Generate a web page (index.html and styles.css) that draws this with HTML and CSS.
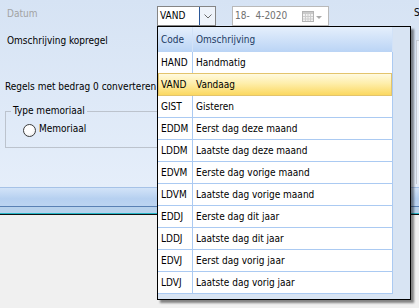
FILE: index.html
```html
<!DOCTYPE html>
<html>
<head>
<meta charset="utf-8">
<link rel="stylesheet" href="styles.css">
</head>
<body>
<div class="screen">
  <div class="panel">
    <div class="form">
      <div class="row row-datum">
        <span class="label label-disabled">Datum</span>
        <div class="combo">
          <span class="combo-text">VAND</span>
          <span class="combo-btn"><svg width="8" height="5" viewBox="0 0 8 5"><polyline points="0.5,0.5 4,4 7.5,0.5" fill="none" stroke="#6a6a6a" stroke-width="1"/></svg></span>
        </div>
        <div class="date">
          <span class="date-text">18-  4-2020</span>
          <svg class="cal" width="12" height="11" viewBox="0 0 12 11"><rect x="0.5" y="0.5" width="11" height="10" fill="#f1f1f1" stroke="#b3b3b3"/><rect x="1" y="1" width="10" height="2" fill="#cacaca"/><path d="M3.5 3v7M6 3v7M8.5 3v7M1 5.5h10M1 8h10" stroke="#cdcdcd" stroke-width="1"/></svg>
          <svg class="arrow" width="6" height="3" viewBox="0 0 6 3"><path d="M0 0h6L3 3z" fill="#a9a9a9"/></svg>
        </div>
      </div>
      <div class="row row-omschr"><span class="label">Omschrijving kopregel</span></div>
      <div class="row row-regels"><span class="label">Regels met bedrag 0 converteren</span></div>
      <fieldset class="group">
        <legend class="group-legend">Type memoriaal</legend>
        <div class="radio-row"><span class="radio-circle"></span><span class="radio-label">Memoriaal</span></div>
      </fieldset>
    </div>
    <div class="side">
      <span class="side-label">S</span>
      <div class="side-box"></div>
    </div>
  </div>
  <div class="band">
    <div class="band-line1"></div>
    <div class="band-main"></div>
    <div class="band-line2"></div>
    <div class="band-low"></div>
    <div class="band-teal"></div>
    <div class="band-dark"></div>
  </div>

  <div class="dropdown">
    <div class="list">
      <div class="list-head">
        <div class="cell c-code">Code</div>
        <div class="cell c-desc">Omschrijving</div>
      </div>
      <div class="list-row"><div class="cell c-code">HAND</div><div class="cell c-desc">Handmatig</div></div>
      <div class="list-row selected"><div class="cell c-code">VAND</div><div class="cell c-desc">Vandaag</div></div>
      <div class="list-row"><div class="cell c-code">GIST</div><div class="cell c-desc">Gisteren</div></div>
      <div class="list-row"><div class="cell c-code">EDDM</div><div class="cell c-desc">Eerst dag deze maand</div></div>
      <div class="list-row"><div class="cell c-code">LDDM</div><div class="cell c-desc">Laatste dag deze maand</div></div>
      <div class="list-row"><div class="cell c-code">EDVM</div><div class="cell c-desc">Eerste dag vorige maand</div></div>
      <div class="list-row"><div class="cell c-code">LDVM</div><div class="cell c-desc">Laatste dag vorige maand</div></div>
      <div class="list-row"><div class="cell c-code">EDDJ</div><div class="cell c-desc">Eerste dag dit jaar</div></div>
      <div class="list-row"><div class="cell c-code">LDDJ</div><div class="cell c-desc">Laatste dag dit jaar</div></div>
      <div class="list-row"><div class="cell c-code">EDVJ</div><div class="cell c-desc">Eerst dag vorig jaar</div></div>
      <div class="list-row"><div class="cell c-code">LDVJ</div><div class="cell c-desc">Laatste dag vorig jaar</div></div>
    </div>
  </div>
</div>
</body>
</html>
```
FILE: styles.css
```css
html, body {
  margin: 0;
  padding: 0;
}
body {
  width: 419px;
  height: 308px;
  overflow: hidden;
  background: #f0f0f0;
  font-family: "DejaVu Sans", "Liberation Sans", sans-serif;
  font-stretch: condensed;
  font-size: 10px;
  color: #000;
}
.screen {
  position: relative;
  width: 419px;
  height: 308px;
  overflow: hidden;
}
.panel {
  display: flex;
  height: 187px;
  background: linear-gradient(#d6e3f4, #e5eefa);
}
.form {
  width: 411px;
  flex: none;
  box-sizing: border-box;
  padding: 6px 0 0 7px;
}
.row {
  display: flex;
  align-items: flex-start;
}
.label {
  line-height: 12px;
  white-space: nowrap;
}
.row-datum .label {
  width: 150px;
  margin-top: 2px;
}
.label-disabled {
  color: #a2a2a2;
}
.combo {
  width: 59px;
  height: 20px;
  box-sizing: border-box;
  border: 1px solid #858585;
  background: #fff;
  display: flex;
}
.combo-text {
  flex: 1;
  padding-left: 2px;
  line-height: 18px;
}
.combo-btn {
  width: 16px;
  box-sizing: border-box;
  border-left: 1px solid #2b5797;
  background: #eef3fa;
  display: flex;
  align-items: center;
  justify-content: center;
  padding-top: 1px;
}
.date {
  margin-left: 16px;
  width: 97px;
  height: 20px;
  box-sizing: border-box;
  border: 1px solid #b9b9b9;
  background: #fff;
  display: flex;
  align-items: center;
  padding: 0 6px 0 2px;
  color: #707070;
}
.date-text {
  white-space: pre;
  line-height: 18px;
}
.cal {
  margin-left: auto;
  margin-top: 1px;
}
.arrow {
  margin-left: 2px;
  margin-top: 2px;
}
.row-omschr {
  margin-top: 9px;
}
.row-regels {
  margin-top: 34px;
  margin-left: -2px;
}
.group {
  margin: 12px 0 0 -2px;
  padding: 0 5px 10px;
  width: 390px;
  box-sizing: border-box;
  border: 1px solid #bcc3cd;
  min-width: 0;
}
.group-legend {
  padding: 0 2px;
  line-height: 12px;
}
.radio-row {
  display: flex;
  align-items: flex-start;
  margin: 6px 0 0 12px;
}
.radio-circle {
  width: 13px;
  height: 13px;
  box-sizing: border-box;
  margin-top: 1px;
  border: 1px solid #3c3c3c;
  border-radius: 50%;
  background: radial-gradient(circle at 40% 35%, #ffffff 40%, #e6e6e6 100%);
}
.radio-label {
  margin-left: 3px;
  line-height: 12px;
}
.side {
  flex: 1;
  overflow: hidden;
  padding: 7px 0 0 3px;
}
.side-label {
  display: block;
  line-height: 12px;
  white-space: nowrap;
}
.side-box {
  margin: 21px 0 0 2px;
  height: 143px;
  border-left: 1px solid #c5cbd4;
  border-top: 1px solid #c5cbd4;
  background: #eaf1fa;
}
.band-line1 {
  height: 1px;
  background: #a6c2e7;
}
.band-main {
  height: 18px;
  background: linear-gradient(#d2e3f8, #b6d0f0 60%, #bcd4f1);
}
.band-line2 {
  height: 1px;
  background: #5a81b4;
}
.band-low {
  height: 6px;
  background: #b7d1ec;
}
.band-teal {
  height: 1px;
  background: #25b6c6;
}
.band-dark {
  height: 1px;
  background: #111;
}

.dropdown {
  position: absolute;
  left: 157px;
  top: 26px;
  width: 254px;
  height: 274px;
  box-sizing: border-box;
  border: 1px solid #000;
  background: #d8e4f3;
  box-shadow: 3px 3px 2px rgba(0, 0, 0, 0.45);
}
.list {
  width: 235px;
  background: #fff;
}
.list-head {
  display: flex;
  height: 25px;
  background: linear-gradient(#e5effc, #bad4f5);
  color: #1d3b63;
}
.list-head .cell {
  line-height: 26px;
  border-right-color: #d2e2f7;
}
.list-row {
  position: relative;
  display: flex;
  height: 22px;
  box-sizing: border-box;
  border-bottom: 1px solid #abcaf2;
}
.cell {
  position: relative;
  box-sizing: border-box;
  padding-left: 3px;
  line-height: 21px;
  white-space: nowrap;
  border-right: 1px solid #abcaf2;
}
.c-code {
  width: 35px;
}
.c-desc {
  width: 200px;
}
.list-row.selected::before {
  content: "";
  position: absolute;
  left: 0;
  right: 1px;
  top: -1px;
  bottom: -1px;
  border: 1px solid #e3c46c;
  background: linear-gradient(#fffadf, #feeeaa 45%, #fbd860);
}
.list-row.selected .cell {
  border-right-color: transparent;
}
.list-row.selected .c-desc {
  border-right-color: #abcaf2;
}
```
